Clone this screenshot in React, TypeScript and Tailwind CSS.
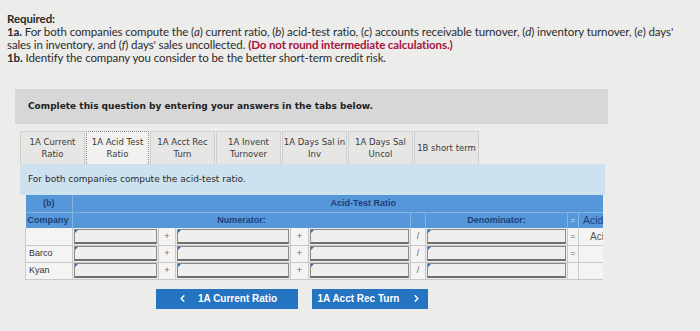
import { ChevronLeft, ChevronRight } from "lucide-react";

const tabs = [
  ["1A Current", "Ratio"],
  ["1A Acid Test", "Ratio"],
  ["1A Acct Rec", "Turn"],
  ["1A Invent", "Turnover"],
  ["1A Days Sal in", "Inv"],
  ["1A Days Sal", "Uncol"],
  ["1B short term", ""],
];

function Input() {
  return (
    <td className="relative p-0 border-x border-[#c9c9c9]">
      <div className="relative h-[15px] mx-[1px] bg-[#efefef] border border-[#8a8a8a] border-b-2 border-b-[#6f6f6f]">
        <span className="absolute left-0 top-0 w-0 h-0 border-t-[3px] border-r-[3px] border-t-[#2f6db5] border-r-transparent" />
      </div>
    </td>
  );
}

function Sym({ s }: { s: string }) {
  return (
    <td className="p-0 text-center text-[9px] text-[#666] bg-[#f4f4f4] border-x border-[#c9c9c9]">{s}</td>
  );
}

export default function App() {
  const rows = ["", "Barco", "Kyan"];
  return (
    <div className="w-[700px] h-[331px] bg-[#ecedeb] overflow-hidden relative">
      {/* Question text */}
      <div className="pl-[7px] pt-[12px] text-[11.5px] leading-[13px] text-[#2b2b2b] font-['Lato',sans-serif] tracking-[-0.1px]">
        <p className="font-bold">Required:</p>
        <p>
          <b>1a.</b> For both companies compute the (<i>a</i>) current ratio, (<i>b</i>) acid-test ratio, (<i>c</i>) accounts receivable turnover, (<i>d</i>) inventory turnover, (<i>e</i>) days'
          <br />
          sales in inventory, and (<i>f</i>) days' sales uncollected.{" "}
          <span className="font-bold text-[#a8123e]">(Do not round intermediate calculations.)</span>
        </p>
        <p>
          <b>1b.</b> Identify the company you consider to be the better short-term credit risk.
        </p>
      </div>

      {/* Banner */}
      <div className="ml-[15px] mt-[25px] w-[593px] h-[35px] bg-[#d6d7d6] flex items-center pl-[13px] font-['DejaVu_Sans',sans-serif] text-[9px] font-bold text-[#1e1e1e]">
        Complete this question by entering your answers in the tabs below.
      </div>

      {/* Tabs */}
      <div className="ml-[20px] mt-[7px] flex gap-[1px] font-['DejaVu_Sans',sans-serif] text-[8.5px] leading-[12px] text-[#3a3a3a]">
        {tabs.map(([a, b], i) => (
          <div
            key={a}
            className={
              i === 1
                ? "w-[63px] h-[33px] flex flex-col items-center justify-center text-center bg-[#f1f1f0] border border-dotted border-[#8c8c8c] border-b-0"
                : "w-[65px] h-[33px] flex flex-col items-center justify-center text-center bg-[#e6e6e5] border border-[#cfcfcf] border-b-0"
            }
          >
            <span className="whitespace-nowrap">{a}</span>
            {b && <span>{b}</span>}
          </div>
        ))}
      </div>

      {/* Instruction bar */}
      <div className="ml-[20px] w-[585px] h-[31px] bg-[#cde2ee] flex items-center pl-[8px] font-['DejaVu_Sans',sans-serif] text-[9px] text-[#2a2a2a]">
        For both companies compute the acid-test ratio.
      </div>

      {/* Table */}
      <div className="ml-[25px] w-[578px] overflow-hidden">
        <table className="table-fixed border-collapse w-[628px] font-['Liberation_Sans',sans-serif] text-[9px]">
          <colgroup>
            <col className="w-[47px]" />
            <col className="w-[86px]" />
            <col className="w-[17px]" />
            <col className="w-[115px]" />
            <col className="w-[18px]" />
            <col className="w-[102px]" />
            <col className="w-[15px]" />
            <col className="w-[142px]" />
            <col className="w-[11px]" />
            <col className="w-[75px]" />
          </colgroup>
          <thead>
            <tr className="h-[17px] bg-[#5597d8] text-[#1d3f78] font-bold">
              <td className="p-0 text-center border-r border-[#86b4e2]">(b)</td>
              <td colSpan={9} className="p-0 text-center">Acid-Test Ratio</td>
            </tr>
            <tr className="h-[14px] bg-[#5597d8] text-[#1d3f78] font-bold border-t border-[#86b4e2]">
              <td className="p-0 pl-[2px] border-r border-[#86b4e2]">Company</td>
              <td colSpan={5} className="p-0 text-center border-r border-[#86b4e2]">Numerator:</td>
              <td className="p-0 border-r border-[#86b4e2]" />
              <td className="p-0 text-center border-r border-[#86b4e2]">Denominator:</td>
              <td className="p-0 text-center border-r border-[#86b4e2] font-normal text-[#dce9f7]">=</td>
              <td className="p-0 pl-[4px] text-[10.5px] font-normal whitespace-nowrap">Acid-Test Ratio</td>
            </tr>
          </thead>
          <tbody>
            {rows.map((name, i) => (
              <tr key={i} className="h-[17px] border-b border-[#c9c9c9]">
                <td className="p-0 pl-[3px] bg-[#f4f4f4] text-[#333] border-l border-[#c9c9c9]">{name}</td>
                <Input />
                <Sym s="+" />
                <Input />
                <Sym s="+" />
                <Input />
                <Sym s="/" />
                <Input />
                <Sym s={i < 2 ? "=" : ""} />
                <td className="p-0 pl-[11px] text-[10px] text-[#555] bg-[#f4f4f4] whitespace-nowrap">{i === 0 ? "Acid-Test Ratio" : ""}</td>
              </tr>
            ))}
          </tbody>
        </table>
      </div>

      {/* Navigation buttons */}
      <div className="ml-[156px] mt-[9px] flex gap-[14px] font-['Liberation_Sans',sans-serif] text-[10px] font-bold text-white">
        <button className="w-[142px] h-[20px] bg-[#2474c2] flex items-center justify-center gap-[10px]">
          <ChevronLeft className="w-[11px] h-[11px]" strokeWidth={3} />
          1A Current Ratio
        </button>
        <button className="w-[116px] h-[20px] bg-[#2474c2] flex items-center justify-center gap-[12px]">
          1A Acct Rec Turn
          <ChevronRight className="w-[11px] h-[11px]" strokeWidth={3} />
        </button>
      </div>
    </div>
  );
}
